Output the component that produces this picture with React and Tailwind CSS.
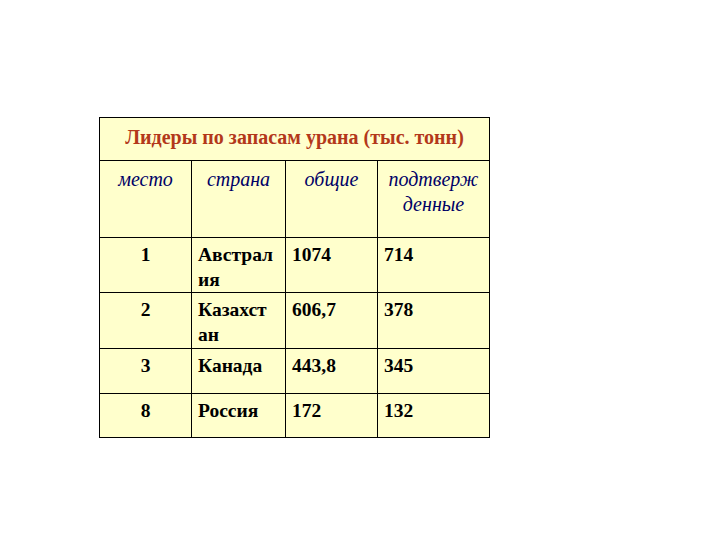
import React from 'react';

const rows = [
  { place: '1', country: ['Австрал', 'ия'], total: '1074', confirmed: '714', h: 'h-[55px]' },
  { place: '2', country: ['Казахст', 'ан'], total: '606,7', confirmed: '378', h: 'h-[56px]' },
  { place: '3', country: ['Канада'], total: '443,8', confirmed: '345', h: 'h-[45px]' },
  { place: '8', country: ['Россия'], total: '172', confirmed: '132', h: 'h-[44px]' },
];

export default function App() {
  return (
    <div className="w-[720px] h-[540px] bg-white relative" style={{ fontFamily: '"Liberation Serif", "Times New Roman", serif' }}>
      <div className="pt-[117px] pl-[99px]">
        <table className="border-collapse bg-[#ffffcc] table-fixed w-[390px]">
          <colgroup>
            <col className="w-[92px]" />
            <col className="w-[94px]" />
            <col className="w-[92px]" />
            <col className="w-[112px]" />
          </colgroup>
          <thead>
            <tr className="h-[43px]">
              <th colSpan={4} className="border border-black p-0 pb-[4px] text-[20px] font-bold text-[#b3381a] text-center align-middle whitespace-nowrap">
                Лидеры по запасам урана (тыс. тонн)
              </th>
            </tr>
            <tr className="h-[77px]">
              {['место', 'страна', 'общие'].map((t) => (
                <th key={t} className="border border-black align-top p-0 pt-[6px] italic font-normal text-[20px] text-[#000066] text-center leading-[25px]">
                  {t}
                </th>
              ))}
              <th className="border border-black align-top p-0 pt-[6px] italic font-normal text-[20px] text-[#000066] text-center leading-[25px]">
                подтверж<br />денные
              </th>
            </tr>
          </thead>
          <tbody>
            {rows.map((r) => (
              <tr key={r.place} className={r.h}>
                <td className="border border-black align-top p-0 pt-[4px] text-center font-bold text-[19.5px] leading-[25px] text-black">{r.place}</td>
                <td className="border border-black align-top p-0 pt-[4px] pl-[6px] font-bold text-[19.5px] leading-[25px] text-black">
                  {r.country.map((c, i) => (
                    <div key={i}>{c}</div>
                  ))}
                </td>
                <td className="border border-black align-top p-0 pt-[4px] pl-[6px] font-bold text-[19.5px] leading-[25px] text-black">{r.total}</td>
                <td className="border border-black align-top p-0 pt-[4px] pl-[6px] font-bold text-[19.5px] leading-[25px] text-black">{r.confirmed}</td>
              </tr>
            ))}
          </tbody>
        </table>
      </div>
    </div>
  );
}
